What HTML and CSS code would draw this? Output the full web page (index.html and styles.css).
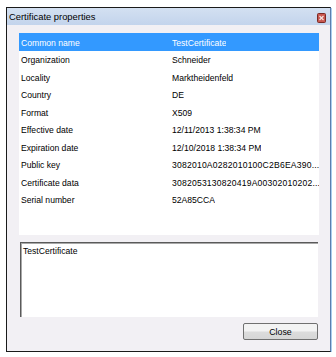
FILE: index.html
```html
<!DOCTYPE html>
<html lang="en">
<head>
  <meta charset="UTF-8">
  <title>Certificate properties</title>
  <link rel="stylesheet" href="styles.css">
</head>
<body>

<div class="window">
  <div class="titlebar">
    <span class="title">Certificate properties</span>
    <svg class="close-x" width="9" height="10" viewBox="0 0 9 10">
      <rect x="0.5" y="0.5" width="8" height="9" rx="1" fill="#c8574f" stroke="#7a2a25"/>
      <path d="M2.5 3 L6.5 7 M6.5 3 L2.5 7" stroke="#f4e4e2" stroke-width="1.2"/>
    </svg>
  </div>

  <div class="content">
    <div class="list">
      <div class="row selected"><span class="name">Common name</span><span class="value">TestCertificate</span></div>
      <div class="row"><span class="name">Organization</span><span class="value">Schneider</span></div>
      <div class="row"><span class="name">Locality</span><span class="value">Marktheidenfeld</span></div>
      <div class="row"><span class="name">Country</span><span class="value">DE</span></div>
      <div class="row"><span class="name">Format</span><span class="value">X509</span></div>
      <div class="row"><span class="name">Effective date</span><span class="value">12/11/2013 1:38:34 PM</span></div>
      <div class="row"><span class="name">Expiration date</span><span class="value">12/10/2018 1:38:34 PM</span></div>
      <div class="row"><span class="name">Public key</span><span class="value hex">3082010A0282010100C2B6EA390...</span></div>
      <div class="row"><span class="name">Certificate data</span><span class="value hex">3082053130820419A00302010202...</span></div>
      <div class="row"><span class="name">Serial number</span><span class="value">52A85CCA</span></div>
    </div>

    <div class="textbox">TestCertificate</div>

    <div class="buttons">
      <button class="btn">Close</button>
    </div>
  </div>
</div>

</body>
</html>
```

FILE: styles.css
```css
body {
  margin: 0;
  padding: 7px 0 0 6px;
  background: white;
  font-family: "Liberation Sans", Arial, sans-serif;
}
.window {
  width: 323px;
  height: 343px;
  border: 1px solid #1a1a1a;
  border-right-color: #5b7fae;
  background: #f2f0f4;
  box-shadow: 1px 1px 0 #a9cdef;
  display: flex;
  flex-direction: column;
}
.titlebar {
  height: 17px;
  background: linear-gradient(#d3e0f1, #c3d4ec);
  display: flex;
  align-items: center;
  justify-content: space-between;
  padding: 0 4px 0 2px;
}
.title {
  font-size: 9.4px;
  color: #000;
}
.close-x {
  display: block;
  margin-top: 2px;
}
.content {
  display: flex;
  flex-direction: column;
  padding: 8px 12px 0 12px;
}
.list {
  width: 300px;
  height: 202px;
  background: white;
}
.row {
  display: flex;
  height: 17.5px;
  align-items: center;
  font-size: 8.6px;
  color: #000;
  padding-top: 2px;
  box-sizing: border-box;
}
.row.selected {
  background: #3399ff;
  color: white;
}
.name {
  flex-shrink: 0;
  width: 151px;
  padding-left: 2px;
}
.value {
  white-space: nowrap;
  overflow: hidden;
}
.value.hex {
  letter-spacing: 0.2px;
}
.textbox {
  margin: 7px 0 0 1px;
  width: 298px;
  height: 75px;
  background: white;
  border-top: 1px solid #5a5a5a;
  border-left: 1px solid #5a5a5a;
  box-shadow: inset 1px 1px 0 #a8a8a8;
  font-size: 8.6px;
  padding: 3px 0 0 2px;
  box-sizing: border-box;
}
.buttons {
  display: flex;
  justify-content: flex-end;
  margin-top: 6px;
}
.btn {
  width: 75px;
  height: 17px;
  border: 1px solid #707070;
  border-radius: 2px;
  background: linear-gradient(#f3f3f3 45%, #dcdcdc 55%, #d6d6d6);
  font-family: "Liberation Sans", Arial, sans-serif;
  font-size: 8.8px;
  color: #000;
  padding: 0;
}
```
